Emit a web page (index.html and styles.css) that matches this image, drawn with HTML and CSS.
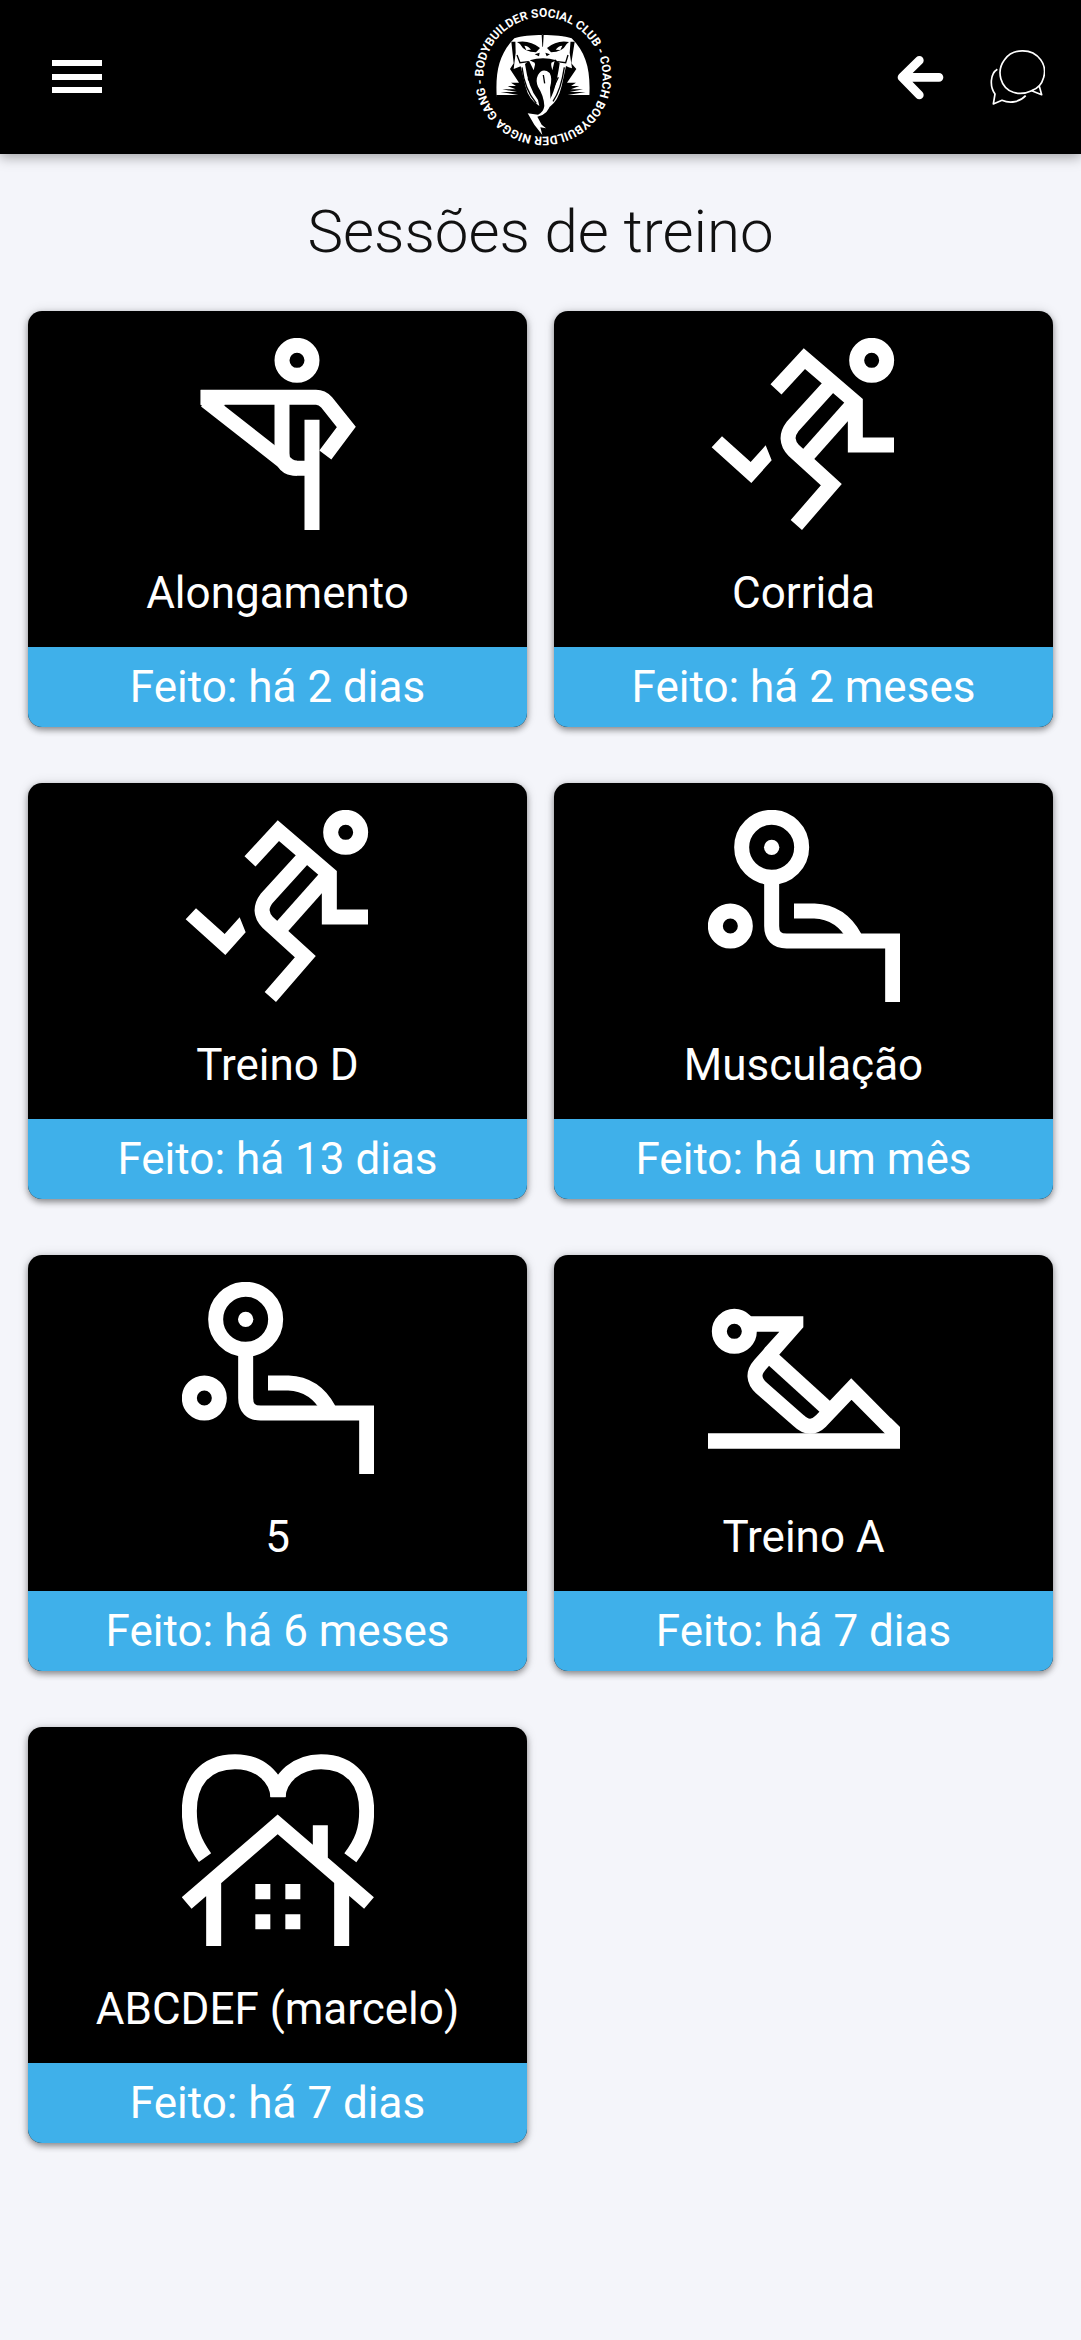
FILE: index.html
```html
<!DOCTYPE html>
<html lang="pt">
<head>
<meta charset="utf-8">
<meta name="viewport" content="width=device-width, initial-scale=1">
<title>Sessões de treino</title>
<link rel="stylesheet" href="styles.css">
</head>
<body>
<svg class="sprite" aria-hidden="true">
  <symbol id="stretch" viewBox="4 55 576 576">
    <circle class="line" cx="349" cy="122" r="45"/>
    <path class="line" d="M380 446H350Q336 446 323 437L75 243"/>
    <path class="line" d="M60 233H406Q424 233 438 248L497 322L434 406"/>
    <path class="line" d="M304 233V401Q304 446 349 446"/>
    <path class="line" d="M394 300V632"/>
    <path class="solid" d="M60 211H120V245L134 256L100 270L60 256Z"/>
  </symbol>
  <symbol id="run" viewBox="24 55 576 576">
    <circle class="line" cx="515" cy="122" r="45"/>
    <path class="line" d="M228 209L313 117L466 248V376H582"/>
    <path class="line" d="M391 196L278 320Q249 358 281 392L394 495L289 616"/>
    <path class="line" d="M456 257L320 410"/>
    <path class="solid" d="M66 350L152 427L197 377L215 422L154 490L35 383Z"/>
  </symbol>
  <symbol id="bench" viewBox="51 64 576 576">
    <circle class="line" cx="242" cy="176" r="90"/>
    <circle class="solid" cx="242" cy="176" r="23"/>
    <circle class="line" cx="118" cy="412" r="45"/>
    <path class="line" d="M242 280V412Q242 457 287 457H605V640"/>
    <path class="line" d="M309 367H370Q450 370 491 446"/>
  </symbol>
  <symbol id="situp" viewBox="51 -27 576 576">
    <circle class="line" cx="130" cy="121" r="45"/>
    <path class="line" d="M240 184L207 221Q175 257 211 291L323 389Q357 422 390 390L481 294L612 426"/>
    <path class="line" d="M240 199L408 352"/>
    <path class="solid" d="M176 76H337V109L254 203L220 172L265 122H176ZM600 382L627 408V473H51V427H583Z"/>
  </symbol>
  <symbol id="home" viewBox="36 44 576 576">
    <path class="line" d="M105 355C71 307 58 272 58 215C58 130 103 67 195 67C270 67 320 115 324 172C328 115 380 67 453 67C545 67 590 130 590 215C590 272 577 307 541 355"/>
    <path class="solid" d="M301 165L324 105L347 165V173H301Z"/>
    <path class="line" d="M50 491L323 255L597 491M131 430V620M515 430V620M451 258V370"/>
    <path class="solid" d="M256 434H301V480H256ZM346 434H391V480H346ZM256 525H301V570H256ZM346 525H391V570H346Z"/>
  </symbol>
</svg>

<header class="topbar">
  <div class="side">
    <button class="icon-button" type="button" aria-label="Menu">
      <svg class="menu-icon" viewBox="0 0 50 34"><path d="M0 0H50V6H0ZM0 14H50V20H0ZM0 27H50V33H0Z"/></svg>
    </button>
  </div>
  <svg class="logo" viewBox="9 0 462 462" role="img" aria-label="Logo">
    <path id="ring" class="ring" d="M67 230A179 179 0 1 1 67 232"/>
    <text class="ring-text"><textPath href="#ring">BODYBUILDER SOCIAL CLUB - COACH BODYBUILDER NIGGA GANG -</textPath></text>
    <path class="fill" d="M107 289C103 210 116 160 160 115C200 102 290 102 332 115C376 160 389 210 385 289L300 289L280 270H215L195 289Z"/>
    <path class="ink" d="M105 285H172L118 276H168L124 268H164L140 258H165L150 248H174L147 207L158 190L151 125H341L331 190L346 207L318 248H345L330 258H355L330 268H366L326 276H374L320 285H388L380 300H112Z"/>
    <path class="fill" d="M163 119Q190 104 230 109L245 104L260 109Q304 104 329 119L326 158L333 205Q322 202 315 198L302 258Q292 302 265 322L262 305Q283 280 296 190L282 178L274 211L266 178L226 178L218 211L204 182L192 192Q202 264 231 300L235 318Q203 298 194 260L179 199L158 207L164 158Z"/>
    <path class="ink" d="M168 126Q206 119 237 144L225 157Q190 157 177 132ZM324 126Q288 119 258 144L270 157Q304 157 317 132ZM242 105H248L246 140H244Z"/>
    <path class="fill" d="M190 137Q201 137 210 149L196 150ZM304 137Q293 137 284 149L298 150Z"/>
    <path class="ink" d="M221 163L236 158L234 169ZM253 158L267 163L257 169ZM206 181Q246 168 286 181L271 188L269 213H226L221 188ZM210 208L224 222L226 267Q209 240 205 205ZM281 208L270 222L270 269Q287 240 288 205Z"/>
    <path class="thin" d="M183 202Q190 267 226 310M310 202Q300 270 276 304M201 235L221 269M292 232L275 267M168 165L177 188L202 185M321 165L314 188L289 185"/>
    <path class="fill" d="M231 225Q245 202 266 219Q275 235 267 263L269 310Q262 345 229 350L242 374L255 385L238 382L244 405L220 374L200 340L231 344Q247 338 250 318Q249 288 231 260Q223 241 231 225Z"/>
    <path class="thin" d="M247 225L251 250"/>
  </svg>
  <div class="side side-end">
    <button class="icon-button" type="button" aria-label="Voltar">
      <svg class="back-icon" viewBox="352 164 141 135"><path d="M419 180L367 231L419 284M370 231H478"/></svg>
    </button>
    <button class="icon-button" type="button" aria-label="Mensagens">
      <svg class="chat-icon" viewBox="633 149 165 165"><path d="M758 271C795 259 808 209 785 178C758 142 701 143 676 179C651 213 664 262 703 276C721 282 741 279 758 271L788 283L780 254M655 207C634 220 631 257 648 281L643 311L669 300C695 311 724 304 740 286"/></svg>
    </button>
  </div>
</header>

<main class="page">
  <h1 class="title">Sessões de treino</h1>
  <div class="grid">
    <a class="card" href="#alongamento"><svg class="figure"><use href="#stretch"/></svg><span class="name">Alongamento</span><span class="done">Feito: há 2 dias</span></a>
    <a class="card" href="#corrida"><svg class="figure"><use href="#run"/></svg><span class="name">Corrida</span><span class="done">Feito: há 2 meses</span></a>
    <a class="card" href="#treino-d"><svg class="figure"><use href="#run"/></svg><span class="name">Treino D</span><span class="done">Feito: há 13 dias</span></a>
    <a class="card" href="#musculacao"><svg class="figure"><use href="#bench"/></svg><span class="name">Musculação</span><span class="done">Feito: há um mês</span></a>
    <a class="card" href="#treino-5"><svg class="figure"><use href="#bench"/></svg><span class="name">5</span><span class="done">Feito: há 6 meses</span></a>
    <a class="card" href="#treino-a"><svg class="figure"><use href="#situp"/></svg><span class="name">Treino A</span><span class="done">Feito: há 7 dias</span></a>
    <a class="card" href="#abcdef"><svg class="figure"><use href="#home"/></svg><span class="name">ABCDEF (marcelo)</span><span class="done">Feito: há 7 dias</span></a>
  </div>
</main>
</body>
</html>
```
FILE: styles.css
```css
* { box-sizing: border-box; }

body {
  margin: 0;
  background: #f4f5fa;
  color: #111;
  font-family: Roboto, sans-serif;
}

.sprite { position: absolute; width: 0; height: 0; }
.line { fill: none; stroke: #fff; stroke-width: 45; stroke-miterlimit: 10; }
.solid { fill: #fff; }

.topbar {
  display: grid;
  grid-template-columns: 1fr auto 1fr;
  align-items: center;
  background: #000;
  box-shadow: 0 3px 12px rgba(0, 0, 0, .35);
}
.side { display: flex; align-items: center; padding: 0 36px 0 52px; }
.side-end { justify-content: flex-end; gap: 46px; }

.icon-button {
  display: flex;
  padding: 0;
  border: 0;
  background: none;
  color: #fff;
  cursor: pointer;
}
.menu-icon { width: 50px; height: 34px; fill: currentColor; }
.back-icon { width: 47px; height: 45px; fill: none; stroke: currentColor; stroke-width: 26; stroke-linecap: round; stroke-linejoin: round; }
.chat-icon { width: 55px; height: 55px; fill: none; stroke: currentColor; stroke-width: 5; stroke-linejoin: round; }

.logo { display: block; width: 154px; height: 154px; }
.ring { fill: none; }
.ring-text { fill: #fff; font-size: 36px; font-weight: 700; }
.fill { fill: #fff; }
.ink { fill: #000; }
.thin { fill: none; stroke: #000; stroke-width: 4; }

.page { padding: 42px 28px 54px; }
.title {
  margin: 0 0 43px;
  font-size: 60px;
  line-height: 72px;
  font-weight: 300;
  text-align: center;
}
.grid {
  display: grid;
  grid-template-columns: 1fr 1fr;
  gap: 56px 27px;
}
.card {
  display: flex;
  flex-direction: column;
  align-items: center;
  overflow: hidden;
  padding-top: 27px;
  border-radius: 14px;
  background: #000;
  color: #fff;
  font-size: 44px;
  text-decoration: none;
  box-shadow: 0 3px 6px rgba(0, 0, 0, .4), 0 0 12px rgba(0, 0, 0, .12);
}
.figure { width: 192px; height: 192px; }
.name { padding: 36px 0 27px; line-height: 54px; white-space: nowrap; }
.done {
  align-self: stretch;
  background: #3fb0ea;
  line-height: 80px;
  text-align: center;
}
```
